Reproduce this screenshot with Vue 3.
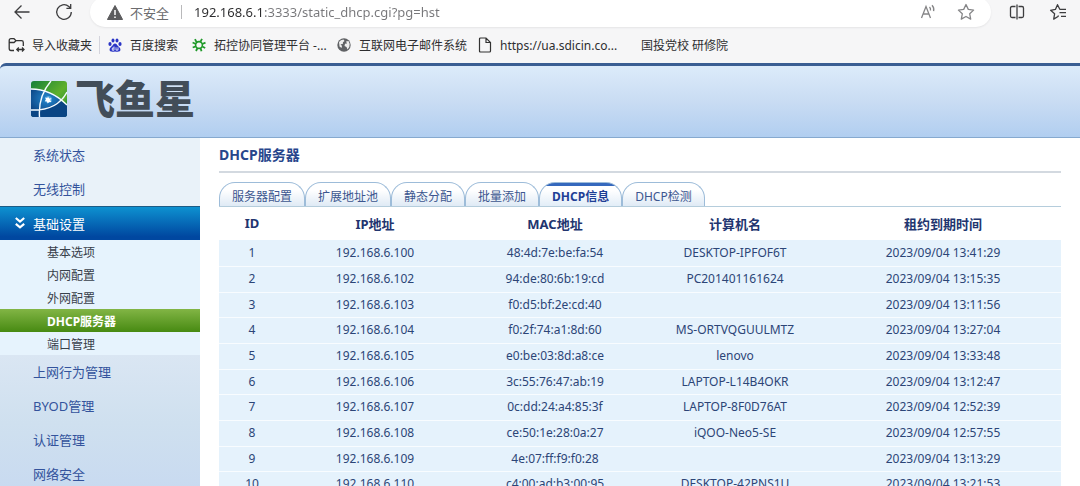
<script setup>
import { ref } from 'vue'

const url = ref('192.168.6.1:3333/static_dhcp.cgi?pg=hst')

const bookmarks = [
  { icon: 'import', label: '导入收藏夹' },
  { icon: 'paw', label: '百度搜索' },
  { icon: 'gear', label: '拓控协同管理平台 -...' },
  { icon: 'globe', label: '互联网电子邮件系统' },
  { icon: 'page', label: 'https://ua.sdicin.co...' },
  { icon: '', label: '国投党校 研修院' },
]

const menuTop = ['系统状态', '无线控制']
const subMenu = ['基本选项', '内网配置', '外网配置', 'DHCP服务器', '端口管理']
const menuBottom = ['上网行为管理', 'BYOD管理', '认证管理', '网络安全']

const tabs = ['服务器配置', '扩展地址池', '静态分配', '批量添加', 'DHCP信息', 'DHCP检测']
const activeTab = ref('DHCP信息')

const columns = ['ID', 'IP地址', 'MAC地址', '计算机名', '租约到期时间']
const leases = [
  ['192.168.6.100', '48:4d:7e:be:fa:54', 'DESKTOP-IPFOF6T', '2023/09/04 13:41:29'],
  ['192.168.6.102', '94:de:80:6b:19:cd', 'PC201401161624', '2023/09/04 13:15:35'],
  ['192.168.6.103', 'f0:d5:bf:2e:cd:40', '', '2023/09/04 13:11:56'],
  ['192.168.6.104', 'f0:2f:74:a1:8d:60', 'MS-ORTVQGUULMTZ', '2023/09/04 13:27:04'],
  ['192.168.6.105', 'e0:be:03:8d:a8:ce', 'lenovo', '2023/09/04 13:33:48'],
  ['192.168.6.106', '3c:55:76:47:ab:19', 'LAPTOP-L14B4OKR', '2023/09/04 13:12:47'],
  ['192.168.6.107', '0c:dd:24:a4:85:3f', 'LAPTOP-8F0D76AT', '2023/09/04 12:52:39'],
  ['192.168.6.108', 'ce:50:1e:28:0a:27', 'iQOO-Neo5-SE', '2023/09/04 12:57:55'],
  ['192.168.6.109', '4e:07:ff:f9:f0:28', '', '2023/09/04 13:13:29'],
  ['192.168.6.110', 'c4:00:ad:b3:00:95', 'DESKTOP-42PNS1U', '2023/09/04 13:21:53'],
]
</script>

<template>
  <div class="window">
    <div class="browser">
      <div class="toolbar">
        <button class="tool" aria-label="后退">
          <svg width="18" height="18" viewBox="0 0 18 18"><path d="M16.5 9H2M8.5 2.5L2 9l6.5 6.5" /></svg>
        </button>
        <button class="tool" aria-label="刷新">
          <svg width="18" height="18" viewBox="0 0 18 18"><path d="M16.3 9a7.3 7.3 0 1 1-2.5-5.5L15.5 5M15.7 1v4.3h-4.3" /></svg>
        </button>
        <div class="address">
          <svg class="warn" width="16" height="15" viewBox="0 0 16 15">
            <path d="M8 0.5L15.6 14.5H0.4z" fill="#5c5c5e" stroke="#5c5c5e" stroke-linejoin="round" />
            <path d="M8 5v5M8 11.5v1.5" stroke="#fff" stroke-width="1.5" />
          </svg>
          <span class="insecure">不安全</span>
          <span class="bar"></span>
          <input v-model="url" class="url" type="text" aria-label="地址" spellcheck="false" />
          <button class="tool soft" aria-label="朗读">
            <svg width="17" height="16" viewBox="0 0 17 16"><path d="M1.5 14L6 2.5 10.5 14M3 10h6M9.5 3q1.3 1.4 1 3.5M12 1.2q2.5 2.6 1.6 6" /></svg>
          </button>
          <button class="tool soft" aria-label="收藏此页">
            <svg width="18" height="18" viewBox="0 0 18 18"><path d="M9 1.5l2.3 4.9 5.3.7-3.9 3.7 1 5.3L9 13.5l-4.7 2.6 1-5.3L1.4 7.1l5.3-.7z" stroke-linejoin="round" /></svg>
          </button>
        </div>
        <button class="tool" aria-label="分屏">
          <svg width="16" height="16" viewBox="0 0 16 16"><path d="M6.5 2.5H3Q1.500 2.500 1.500 4v8q0 1.500 1.500 1.500h3.500M9.500 2.500h3.500q1.500 0 1.500 1.500v8q0 1.500-1.500 1.500h-3.500M8 0.500v15" /></svg>
        </button>
        <button class="tool" aria-label="收藏夹">
          <svg width="18" height="18" viewBox="0 0 18 18"><path d="M9.500 12.500l-.5 1-4.300 2.600.9-5.300L1.600 7.300l4.800-.9L8.500 1.700l2.300 4.600H17M10.500 9.700h6.500M12 13.300h5" stroke-linejoin="round" /></svg>
        </button>
      </div>
      <nav class="bookmarks" aria-label="收藏夹栏">
        <a v-for="b in bookmarks" :key="b.label" href="#" :class="['bookmark', b.icon]">
          <svg v-if="b.icon === 'import'" width="17" height="16" viewBox="0 0 17 16" fill="none" stroke="#333" stroke-width="1.3">
            <path d="M6 13.500H3Q1.200 13.500 1.200 11.500V3.500Q1.200 1.700 3 1.700H6L8 3.700H13.500Q15.300 3.700 15.300 5.500V9M1.500 5.500H6L8 3.700M9 12.500H16M10.800 10.500L8.800 12.500l2 2M14 10.500l2 2-2 2" />
          </svg>
          <svg v-else-if="b.icon === 'paw'" width="14" height="14" viewBox="0 0 14 14" fill="#2b35c6">
            <ellipse cx="2" cy="6" rx="1.6" ry="2" /><ellipse cx="5" cy="2.5" rx="1.5" ry="2.1" />
            <ellipse cx="9" cy="2.5" rx="1.5" ry="2.1" /><ellipse cx="12" cy="6" rx="1.6" ry="2" />
            <path d="M7 5.500q1.500 0 2.500 2l2.500 2.500q1.300 3-1.300 3.600Q9 13.800 7 13.400q-2 .4-3.700.2Q.7 13 2 10l2.500-2.500q1-2 2.500-2z" />
            <path d="M6 8.500v3.700H4.300V10H6M8 9.300v2.800h2V9.300" fill="none" stroke="#fff" stroke-width=".8" />
          </svg>
          <svg v-else-if="b.icon === 'gear'" width="14" height="14" viewBox="0 0 14 14" fill="none" stroke="#219a2b">
            <circle cx="7" cy="7" r="3.4" stroke-width="1.6" />
            <path d="M4.500 4.200L3 1.200M8.500 3.700L10 .8M10.300 6L13.500 4.600M10.200 8.500l3 1.500M8.500 10l1 3.300M5.500 10L4 13M4 8.300L.7 9.500M4 6L.6 4.500" stroke-width="1.8" />
          </svg>
          <svg v-else-if="b.icon === 'globe'" width="14" height="14" viewBox="0 0 14 14">
            <circle cx="7" cy="7" r="6.7" fill="#606265" />
            <path d="M2 4q1.500-2.500 4.500-2.600L7.500 3 6 4.200 5.800 6 3.500 6.200 5 8l-.5 2L2.500 8.500zM9 3.500L11.500 3q2 3 .8 6L10.500 11.500 9.500 9 7.500 8 8 5.800 10 5.500z" fill="#eee" />
          </svg>
          <svg v-else-if="b.icon === 'page'" width="14" height="16" viewBox="0 0 14 16" fill="none" stroke="#333" stroke-width="1.2">
            <path d="M2.500 1H8l4.500 4.500V14q0 1-1 1h-9q-1 0-1-1V2q0-1 1-1zM8 1v4.500h4.500" />
          </svg>
          <span>{{ b.label }}</span>
        </a>
      </nav>
    </div>

    <header class="banner">
      <svg class="mark" width="36" height="36" viewBox="0 0 36 36">
        <defs>
          <linearGradient id="leaf" x1="0" y1="0" x2="1" y2="1">
            <stop offset="0" stop-color="#15803a" /><stop offset=".55" stop-color="#5fb02c" /><stop offset="1" stop-color="#15843e" />
          </linearGradient>
          <radialGradient id="sea" cx=".45" cy=".35" r=".6">
            <stop offset="0" stop-color="#2489d0" /><stop offset="1" stop-color="#0a3f7e" />
          </radialGradient>
          <clipPath id="tile"><rect width="36" height="36" rx="3" /></clipPath>
        </defs>
        <g clip-path="url(#tile)">
          <rect width="36" height="36" fill="url(#leaf)" />
          <path d="M0 8Q20 7 36 23.500V36H0z" fill="url(#sea)" />
          <path d="M28.500 19Q33 16 36 12V24z" fill="url(#leaf)" />
          <path d="M0 29Q17 29 29 19.500L36 25V36H0z" fill="#0a4584" />
          <path d="M0 8Q20 8 36 24M0 29Q26 30 36 11M20 0Q7 15 8.500 36" fill="none" stroke="#f4fbff" stroke-width="1.4" />
          <circle cx="17.500" cy="18.500" r="3.500" fill="#7cc4f2" opacity=".5" />
          <path d="M17 15.500l1.200 1.900 2.300-.2-1.300 1.900 1.200 2-2.300-.2L16.700 22.500l-.8-2.100-2.200-.1 1.400-1.700-1-2 2.200.3z" fill="#fff" />
        </g>
      </svg>
      <span class="brand">飞鱼星</span>
    </header>

    <div class="body">
      <nav class="side" aria-label="主菜单">
        <a v-for="m in menuTop" :key="m" href="#" class="item">{{ m }}</a>
        <a href="#" class="item open">
          <svg class="chevrons" width="10" height="12" viewBox="0 0 10 12" fill="none" stroke="#fff" stroke-width="2.2">
            <path d="M.8 1L5 4.500 9.200 1M.8 6.800L5 10.300l4.200-3.500" />
          </svg>
          <span>基础设置</span>
        </a>
        <div class="subs">
          <a v-for="s in subMenu" :key="s" href="#" :class="['sub', { current: s === 'DHCP服务器' }]">{{ s }}</a>
        </div>
        <div class="rest">
          <a v-for="m in menuBottom" :key="m" href="#" class="item">{{ m }}</a>
        </div>
      </nav>

      <main class="content">
        <h1 class="title">DHCP服务器</h1>
        <div class="tabs" role="tablist">
          <button
            v-for="t in tabs"
            :key="t"
            role="tab"
            :aria-selected="t === activeTab"
            :class="['tab', { active: t === activeTab }]"
            @click="activeTab = t"
          >{{ t }}</button>
        </div>
        <table class="leases">
          <colgroup>
            <col class="c-id" /><col class="c-mid" /><col class="c-mid" /><col class="c-mid" /><col />
          </colgroup>
          <thead>
            <tr><th v-for="c in columns" :key="c" scope="col">{{ c }}</th></tr>
          </thead>
          <tbody>
            <tr v-for="(row, i) in leases" :key="i">
              <td>{{ i + 1 }}</td>
              <td v-for="(cell, j) in row" :key="j">{{ cell }}</td>
            </tr>
          </tbody>
        </table>
      </main>
    </div>
  </div>
</template>

<style>
body {
  background: #fff;
}
</style>

<style scoped>
.window {
  display: flex;
  flex-direction: column;
  height: 100vh;
  overflow: hidden;
  font-family: "Noto Sans", "Noto Sans CJK SC", sans-serif;
  font-size: 12px;
  color: #2c4577;
}
a {
  color: inherit;
  text-decoration: none;
}
button {
  font: inherit;
  color: inherit;
  cursor: pointer;
}

.browser {
  flex: none;
  background: #f6f6f7;
  overflow: hidden;
}
.toolbar {
  display: flex;
  align-items: center;
  height: 30px;
  margin-top: -3px;
  padding: 0 13px;
  gap: 24px;
}
.tool {
  display: flex;
  padding: 0;
  border: 0;
  background: none;
}
.tool svg {
  fill: none;
  stroke: #3d3d3f;
  stroke-width: 1.3;
}
.soft svg {
  stroke: #858587;
}
.address {
  flex: 1;
  display: flex;
  align-items: center;
  height: 30px;
  margin-right: -6px;
  margin-left: -7px;
  padding: 0 16px 0 17px;
  border-radius: 15px;
  background: #fff;
  box-shadow: 0 1px 2px #e4e4e6;
}
.insecure {
  margin-left: 7px;
  font-size: 13px;
  color: #6c6c6e;
}
.bar {
  width: 1px;
  height: 14px;
  margin: 0 12px;
  background: #b9b9bb;
}
.url {
  flex: 1;
  min-width: 0;
  padding: 0;
  border: 0;
  outline: 0;
  font: inherit;
  font-size: 13px;
  color: transparent;
  background: linear-gradient(90deg, #2c2c2e 70px, #77777a 70px);
  -webkit-background-clip: text;
  background-clip: text;
}
.address .tool {
  margin-left: 20px;
}
.bookmarks {
  display: grid;
  grid-template-columns: 100px 84px 145px 141px 163px auto;
  align-items: center;
  height: 36px;
  padding-left: 8px;
  color: #2e2e30;
}
.bookmark {
  display: flex;
  align-items: center;
  gap: 8px;
  white-space: nowrap;
}
.bookmark.import {
  gap: 7px;
  margin-right: 8px;
  border-right: 1px solid #d4d4dc;
}

.banner {
  flex: none;
  display: flex;
  align-items: center;
  gap: 8px;
  height: 71px;
  padding-left: 31px;
  border-top: 3px solid #3a5e93;
  border-bottom: 1px solid #86a9cf;
  border-top-left-radius: 6px;
  background: linear-gradient(#dcebfa, #c9dcf3 50%, #b1cef0);
}
.mark {
  margin-bottom: 6px;
}
.brand {
  margin-bottom: 6px;
  font-size: 40px;
  font-weight: 900;
  line-height: 40px;
  color: #424d58;
}

.body {
  flex: 1;
  min-height: 0;
  display: flex;
}
.side {
  flex: none;
  width: 200px;
  display: flex;
  flex-direction: column;
  overflow: hidden;
  background: #e9f2f9;
}
.item {
  flex: none;
  box-sizing: border-box;
  display: flex;
  align-items: center;
  height: 34px;
  padding-left: 33px;
  padding-bottom: 2px;
  font-size: 13px;
  color: #33539c;
}
.open {
  gap: 8px;
  padding-left: 15px;
  padding-bottom: 0;
  color: #fff;
  background: linear-gradient(#0e94d2, #0047a0 90%);
  box-shadow: inset 0 1px #1c5c86;
}
.subs {
  flex: none;
  background: #e6f3fd;
}
.sub {
  display: flex;
  align-items: center;
  height: 23px;
  padding-left: 47px;
  color: #38404a;
}
.current {
  font-weight: 700;
  color: #fff;
  background: linear-gradient(#82b545, #478a12);
}
.rest {
  flex: 1 0 auto;
  background: linear-gradient(#dae6f3, #cfe0ef 50%, #c8daf0);
}

.content {
  flex: 1;
  min-width: 0;
  padding: 0 19px;
}
.title {
  margin: 0 0 9px;
  border-bottom: 2px solid #d3d9e0;
  font-size: 14px;
  line-height: 33px;
  color: #27468c;
}
.tabs {
  display: flex;
  border-bottom: 1px solid #b5cddc;
}
.tab {
  height: 24px;
  padding: 3px 12px 0;
  border: 1px solid #9dbcd9;
  border-bottom: 0;
  border-radius: 16px 16px 0 0;
  background: linear-gradient(#fff 30%, #dfeaf5);
  color: #3c568f;
  white-space: nowrap;
}
.active {
  font-weight: 700;
  color: #1f3f96;
  background:
    linear-gradient(#3568bd, #3568bd) center top / calc(100% - 12px) 3px no-repeat,
    linear-gradient(#fff 30%, #e2edf7);
}
.leases {
  width: 100%;
  table-layout: fixed;
  border-collapse: collapse;
  text-align: center;
}
.c-id {
  width: 66px;
}
.c-mid {
  width: 180px;
}
th {
  height: 33px;
  padding: 0 0 1px;
  box-sizing: border-box;
  font-size: 13px;
  color: #22356f;
}
td {
  box-sizing: border-box;
  height: 26px;
  padding: 0;
  border-bottom: 1px solid #f8fcff;
  line-height: 16px;
  background: #e5f2fc;
}
tr:nth-child(3n) td {
  height: 25px;
}
</style>
